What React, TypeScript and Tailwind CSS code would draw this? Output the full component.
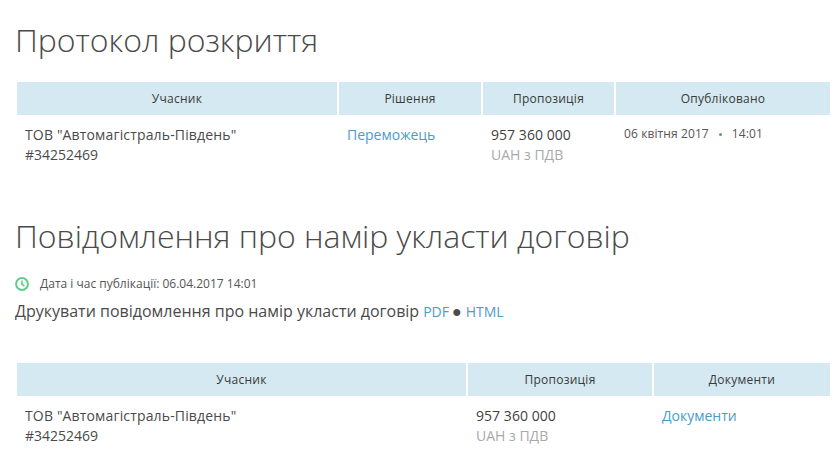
const font = { fontFamily: '"Open Sans", sans-serif' };

const Clock = () => (
  <svg width="14" height="14" viewBox="0 0 14 14" fill="none" className="shrink-0">
    <circle cx="7" cy="7" r="5.9" stroke="#5fce8c" strokeWidth="2" />
    <path d="M7 3.6V7.3L9.4 9" stroke="#5fce8c" strokeWidth="1.6" />
  </svg>
);

const Company = () => (
  <div className="pl-2 text-sm leading-5 text-[#4a4a4a]">
    <div className="tracking-[0.15px]">ТОВ "Автомагістраль-Південь"</div>
    <div>#34252469</div>
  </div>
);

const Price = () => (
  <div className="pl-2 text-sm leading-5">
    <div className="tracking-[0.05px] text-[#3f3f3f]">957 360 000</div>
    <div className="text-[#a9a9a9]">UAH з ПДВ</div>
  </div>
);

const Head = ({ children }: { children: string }) => (
  <div className="flex h-[33px] items-center justify-center bg-[#d4e9f1] text-xs font-medium tracking-[0.25px] text-[#3a3a3a]">
    {children}
  </div>
);

export default function App() {
  return (
    <div className="h-[474px] w-[834px] overflow-hidden bg-white text-[#444]" style={font}>
      <h1 className="pl-[15px] pt-[19px] text-[32px] leading-[42px] font-light tracking-[-0.03px] text-[#4a4a4a]">Протокол розкриття</h1>

      <div className="mt-[21px] ml-[17px] grid w-[813px] grid-cols-[320px_142px_131px_214px] gap-x-[2px]">
        <Head>Учасник</Head>
        <Head>Рішення</Head>
        <Head>Пропозиція</Head>
        <Head>Опубліковано</Head>
        <div className="pt-[10px]"><Company /></div>
        <div className="pl-2 pt-[10px] text-sm leading-5 text-[#4a9cc9]">Переможець</div>
        <div className="pt-[10px]"><Price /></div>
        <div className="flex items-center gap-[10px] self-start pl-2 pt-[9px] text-xs leading-5 tracking-[0.1px] text-[#555]">
          <span>06 квітня 2017</span>
          <span className="h-[3px] w-[3px] rounded-full bg-[#5f9f72]" />
          <span>14:01</span>
        </div>
      </div>

      <h2 className="mt-[50px] pl-[15px] text-[32px] leading-[42px] font-light tracking-[-0.03px] text-[#4a4a4a]">
        Повідомлення про намір укласти договір
      </h2>

      <div className="mt-[18px] flex items-center gap-[10px] pl-[15px] text-xs leading-[18px] text-[#555]">
        <Clock />
        <span className="pl-px">Дата і час публікації: 06.04.2017 14:01</span>
      </div>
      <div className="mt-2 flex items-baseline pl-[15px] text-base leading-5 text-[#4a4a4a]">
        <span>Друкувати повідомлення про намір укласти договір</span>
        <span className="ml-1 text-sm text-[#4a9cc9]">PDF</span>
        <span className="ml-[3px] mr-1 text-base leading-5">●</span>
        <span className="text-sm text-[#4a9cc9]">HTML</span>
      </div>

      <div className="mt-[41px] ml-[17px] grid w-[813px] grid-cols-[449px_184px_176px] gap-x-[2px]">
        <Head>Учасник</Head>
        <Head>Пропозиція</Head>
        <Head>Документи</Head>
        <div className="pt-[10px]"><Company /></div>
        <div className="pt-[10px]"><Price /></div>
        <div className="pl-2 pt-[10px] text-sm leading-5 text-[#4a9cc9]">Документи</div>
      </div>
    </div>
  );
}
